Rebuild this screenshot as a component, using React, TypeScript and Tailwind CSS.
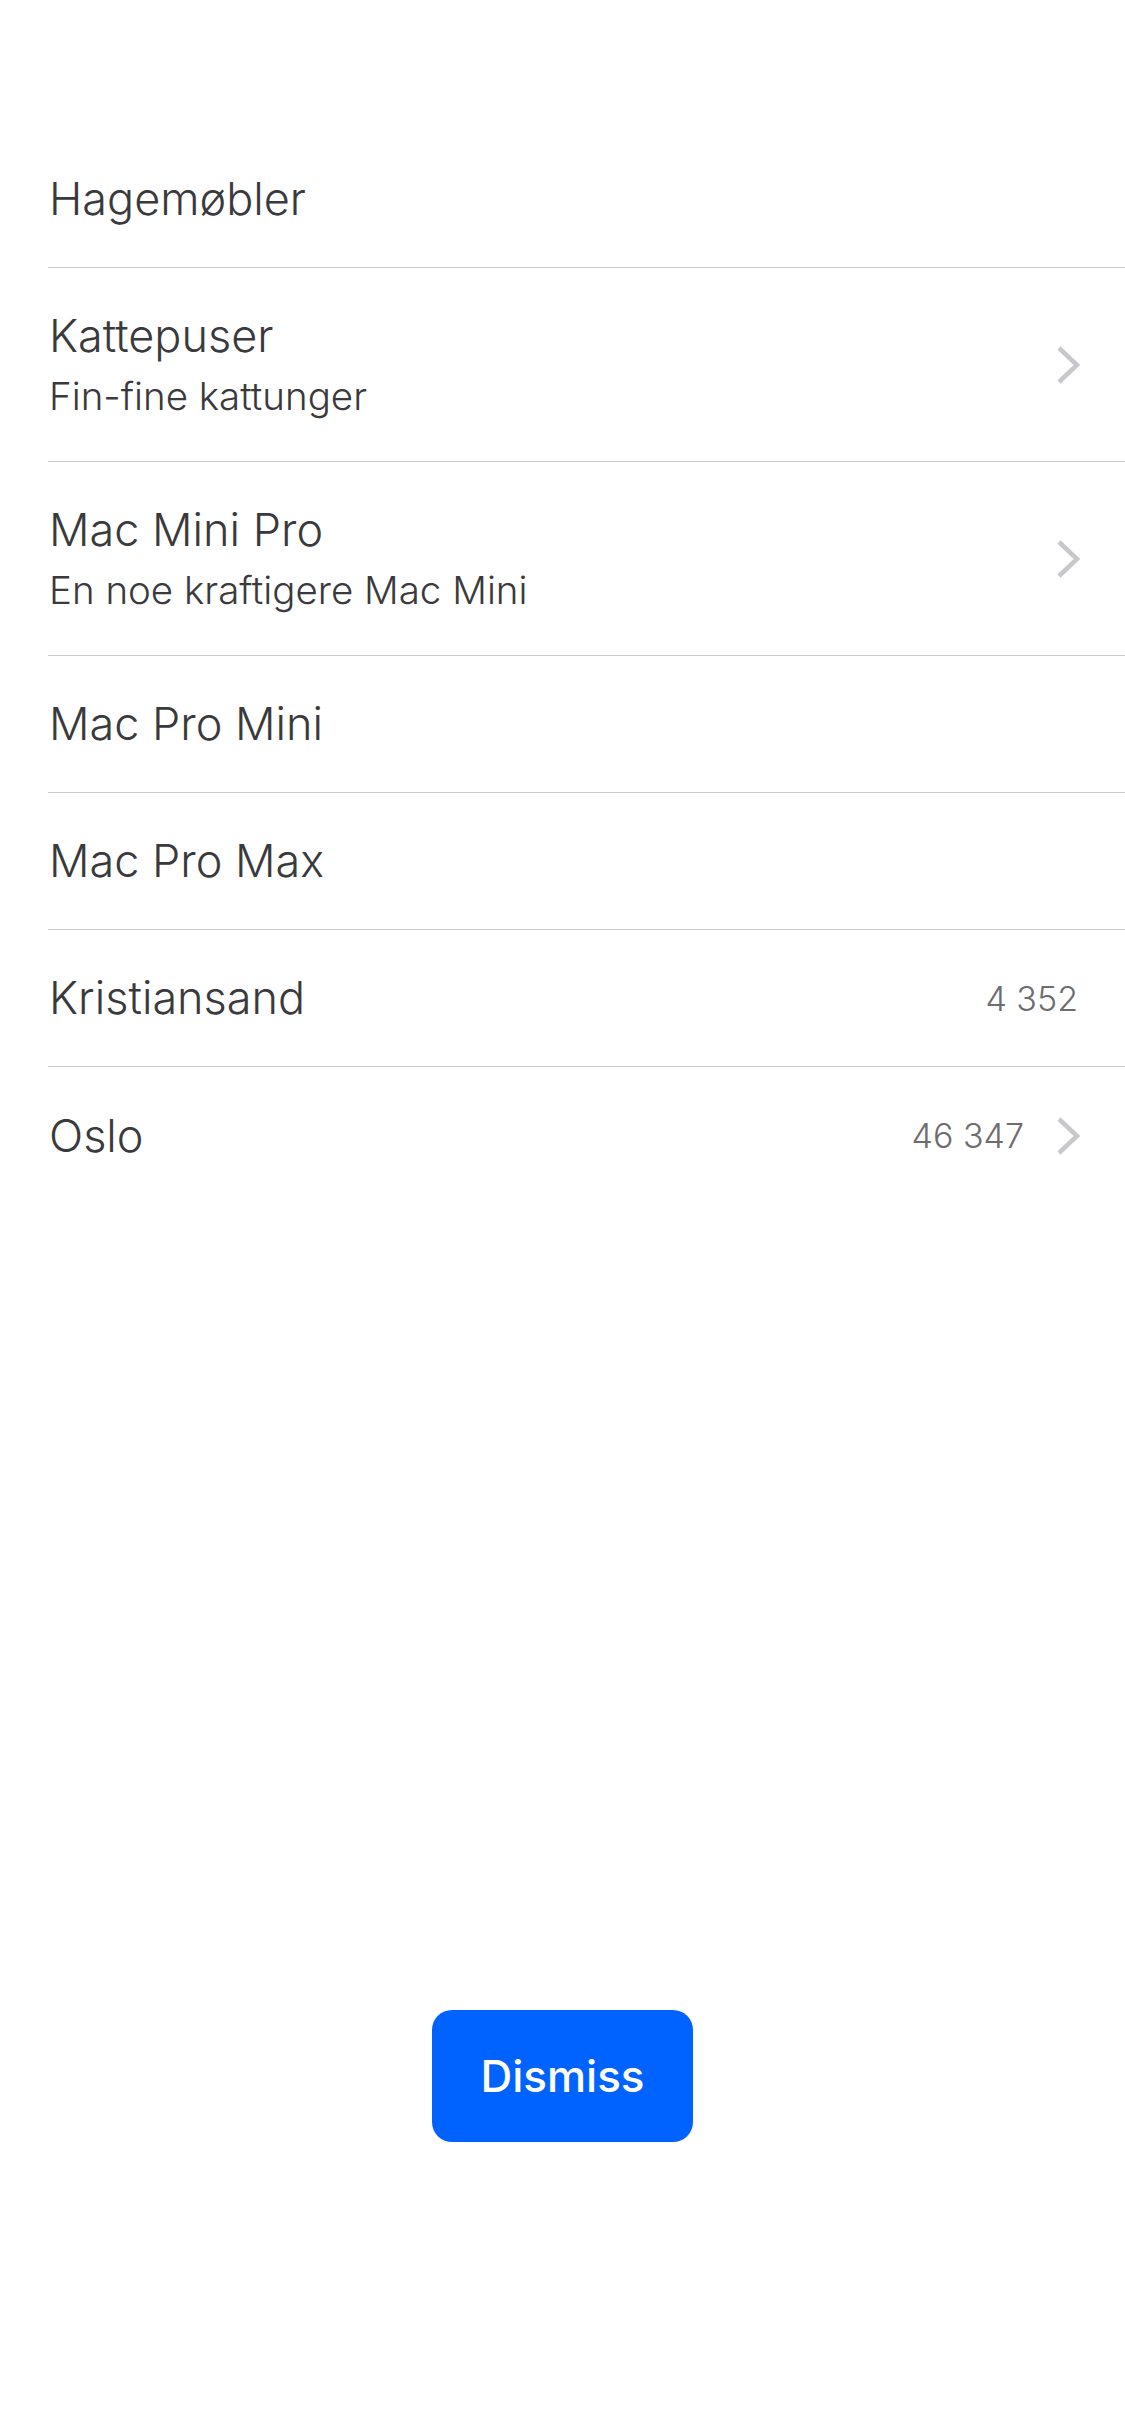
type Row = {
    title: string;
    subtitle?: string;
    value?: string;
    chevron?: boolean;
};

const rows: Row[] = [
    { title: "Hagemøbler" },
    { title: "Kattepuser", subtitle: "Fin-fine kattunger", chevron: true },
    { title: "Mac Mini Pro", subtitle: "En noe kraftigere Mac Mini", chevron: true },
    { title: "Mac Pro Mini" },
    { title: "Mac Pro Max" },
    { title: "Kristiansand", value: "4 352" },
    { title: "Oslo", value: "46 347", chevron: true },
];

const Chevron = () => (
    <svg width="24" height="40" viewBox="0 0 24 40" fill="none" className="shrink-0">
        <polyline
            points="3,3 21,20 3,37"
            stroke="#c7c7cc"
            strokeWidth="4.5"
            strokeLinecap="butt"
            strokeLinejoin="miter"
        />
    </svg>
);

const ListRow = ({ row, last }: { row: Row; last: boolean }) => {
    return (
        <div className="pl-[48px]">
            <div
                className={
                    "flex items-center pr-[45px] " +
                    (row.subtitle ? "h-[194px] " : "h-[137px] ") +
                    (last ? "" : "border-b border-[#c8c8cc]")
                }
            >
                <div
                    className={
                        "flex flex-col flex-1 min-w-0 pl-[1px] " +
                        (row.subtitle ? "pt-[6px]" : "")
                    }
                >
                    <span className="text-[45px] leading-[56px] font-light text-[#3a3a3c]">
                        {row.title}
                    </span>
                    {row.subtitle && (
                        <span className="text-[38.5px] leading-[64px] font-light text-[#3a3a3c]">
                            {row.subtitle}
                        </span>
                    )}
                </div>
                {row.value && (
                    <span className="text-[34px] font-light text-[#6d6d70] mr-[2px]">
                        {row.value}
                    </span>
                )}
                {row.chevron && (
                    <div className={row.value ? "ml-[30px]" : ""}>
                        <Chevron />
                    </div>
                )}
            </div>
        </div>
    );
};

export default function App() {
    return (
        <div
            className="min-h-[2436px] w-full bg-white flex flex-col"
            style={{ fontFamily: "Inter, 'Noto Sans', sans-serif" }}
        >
            <div className="pt-[131px]">
                {rows.map((row, i) => (
                    <ListRow key={row.title} row={row} last={i === rows.length - 1} />
                ))}
            </div>
            <div className="flex-1" />
            <div className="flex justify-center pb-[294px]">
                <button className="w-[261px] h-[132px] rounded-[20px] bg-[#0062ff] text-white text-[44px] font-medium">
                    Dismiss
                </button>
            </div>
        </div>
    );
}
